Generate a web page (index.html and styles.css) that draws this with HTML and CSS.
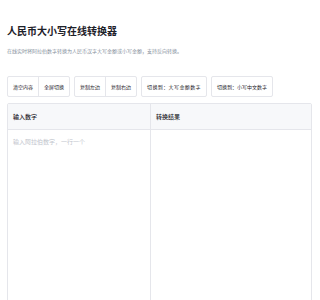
FILE: index.html
```html
<!DOCTYPE html>
<html lang="zh-CN">
<head>
<meta charset="utf-8">
<title>人民币大小写在线转换器</title>
<link rel="stylesheet" href="styles.css">
</head>
<body>
<div class="page">
  <h1 class="title">人民币大小写在线转换器</h1>
  <p class="desc">在线实时将阿拉伯数字转换为人民币汉字大写金额或小写金额，支持反向转换。</p>
  <div class="toolbar">
    <div class="group">
      <button class="btn">清空内容</button>
      <button class="btn">全屏切换</button>
    </div>
    <div class="group">
      <button class="btn">复制左边</button>
      <button class="btn">复制右边</button>
    </div>
    <div class="group">
      <button class="btn btn-wide">切换到：大写金额数字</button>
    </div>
    <div class="group">
      <button class="btn btn-mid">切换到：小写中文数字</button>
    </div>
  </div>
  <div class="panel">
    <div class="col">
      <div class="col-head">输入数字</div>
      <div class="col-body"><span class="placeholder">输入阿拉伯数字，一行一个</span></div>
    </div>
    <div class="col col-right">
      <div class="col-head">转换结果</div>
      <div class="col-body"></div>
    </div>
  </div>
</div>
</body>
</html>
```
FILE: styles.css
```css
html, body {
  margin: 0;
  padding: 0;
  background: #ffffff;
}
body {
  font-family: "Noto Sans CJK SC", "Noto Sans", sans-serif;
  color: #1d2129;
}
.page {
  padding: 24px 8px 0 7px;
}
.title {
  margin: 0;
  font-size: 10px;
  line-height: 14px;
  font-weight: 700;
  color: #1d2129;
}
.desc {
  margin: 9px 0 0;
  font-size: 5px;
  line-height: 8px;
  color: #86909c;
}
.toolbar {
  margin-top: 21px;
  display: flex;
  gap: 4px;
}
.group {
  display: flex;
  border: 1px solid #e5e6eb;
  border-radius: 2px;
  background: #fff;
}
.btn {
  font-family: inherit;
  font-size: 5px;
  line-height: 19px;
  height: 19px;
  padding: 0 5px;
  width: 30px;
  border: 0;
  background: transparent;
  color: #1d2129;
  cursor: pointer;
  white-space: nowrap;
}
.btn + .btn {
  border-left: 1px solid #e5e6eb;
  width: 31px;
}
.btn-wide {
  width: 64px;
  letter-spacing: 0.4px;
}
.btn-mid {
  width: 60px;
}
.panel {
  margin-top: 6px;
  display: grid;
  grid-template-columns: 142px 1fr;
  border: 1px solid #e5e6eb;
  border-radius: 2px;
  height: 204px;
}
.col-right {
  border-left: 1px solid #e5e6eb;
}
.col-head {
  height: 25px;
  line-height: 25px;
  padding-left: 5px;
  font-size: 6px;
  font-weight: 500;
  background: #f7f8fa;
  border-bottom: 1px solid #e5e6eb;
  color: #1d2129;
}
.col-body {
  padding: 8px 5px;
  font-size: 6px;
  line-height: 8px;
}
.placeholder {
  color: #c0c4cc;
}
```
